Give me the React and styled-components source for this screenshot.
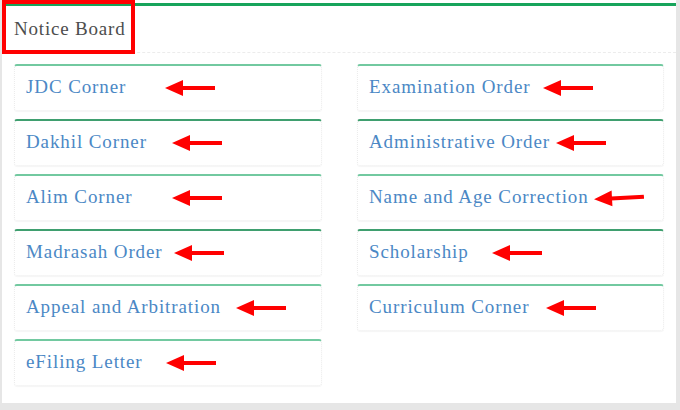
import React from 'react';
import styled, { createGlobalStyle } from "styled-components";

const notices = [
    { title: 'JDC Corner', arrow: 150 },
    { title: 'Examination Order', arrow: 185 },
    { title: 'Dakhil Corner', arrow: 157, dark: true },
    { title: 'Administrative Order', arrow: 198, dark: true },
    { title: 'Alim Corner', arrow: 157 },
    { title: 'Name and Age Correction', arrow: 236, tilt: true },
    { title: 'Madrasah Order', arrow: 159, dark: true },
    { title: 'Scholarship', arrow: 134, dark: true },
    { title: 'Appeal and Arbitration', arrow: 221 },
    { title: 'Curriculum Corner', arrow: 188 },
    { title: 'eFiling Letter', arrow: 151 },
]

function Arrow({ left, tilt }) {
    return (
        <ArrowMark left={left} tilt={tilt} width="50" height="18" viewBox="0 0 50 18">
            <polygon points="0,9 18,1 18,17" fill="#ff0000" />
            <rect x="17" y="7" width="33" height="4" fill="#ff0000" />
        </ArrowMark>
    )
}

export default function App() {
    return (
        <>
            <GlobalStyle />
            <Page>
                <Panel>
                    <Header>
                        <Title>Notice Board</Title>
                        <Highlight />
                    </Header>
                    <Grid>
                        {notices.map((n) => (
                            <Card key={n.title} dark={n.dark}>
                                <CardLink>{n.title}</CardLink>
                                <Arrow left={n.arrow} tilt={n.tilt} />
                            </Card>
                        ))}
                    </Grid>
                </Panel>
            </Page>
        </>
    )
}

const GlobalStyle = createGlobalStyle`
body {
  margin: 0;
  background: #e6e6e6;
  font-family: "Liberation Serif", "Times New Roman", serif;
}
`

const Page = styled.div`
width: 680px;
height: 410px;
overflow: hidden;
`

const Panel = styled.div`
position: relative;
margin-left: 2px;
width: 674px;
height: 403px;
background: #fff;
padding-top: 3px;
box-sizing: border-box;
&::before {
  content: "";
  display: block;
  height: 3px;
  background: #17a45b;
}
`

const Header = styled.div`
position: relative;
height: 46px;
border-bottom: 1px dashed #ececec;
display: flex;
align-items: center;
padding-left: 12px;
`

const Title = styled.h3`
margin: 0;
font-size: 19px;
font-weight: normal;
color: #4d4d4d;
letter-spacing: 0.8px;
`

const Highlight = styled.div`
position: absolute;
left: 0;
top: -6px;
width: 133px;
height: 54px;
border: 4px solid #ff0000;
box-sizing: border-box;
`

const Grid = styled.div`
display: grid;
grid-template-columns: 308px 307px;
column-gap: 35px;
row-gap: 8px;
padding: 11px 0 0 12px;
`

const Card = styled.div`
position: relative;
height: 47px;
box-sizing: border-box;
border: 1px dotted #ececec;
border-top: 2px solid ${(p) => (p.dark ? '#3f9f6f' : '#72c9a0')};
border-radius: 3px;
box-shadow: 0 1px 1px rgba(0, 0, 0, 0.04);
display: flex;
align-items: center;
padding: 0 0 2px 11px;
`

const CardLink = styled.a`
font-size: 19px;
color: #4b88c5;
letter-spacing: 0.9px;
text-decoration: none;
`

const ArrowMark = styled.svg`
position: absolute;
left: ${(p) => p.left}px;
top: 13px;
transform: ${(p) => (p.tilt ? 'rotate(-3deg)' : 'none')};
`
